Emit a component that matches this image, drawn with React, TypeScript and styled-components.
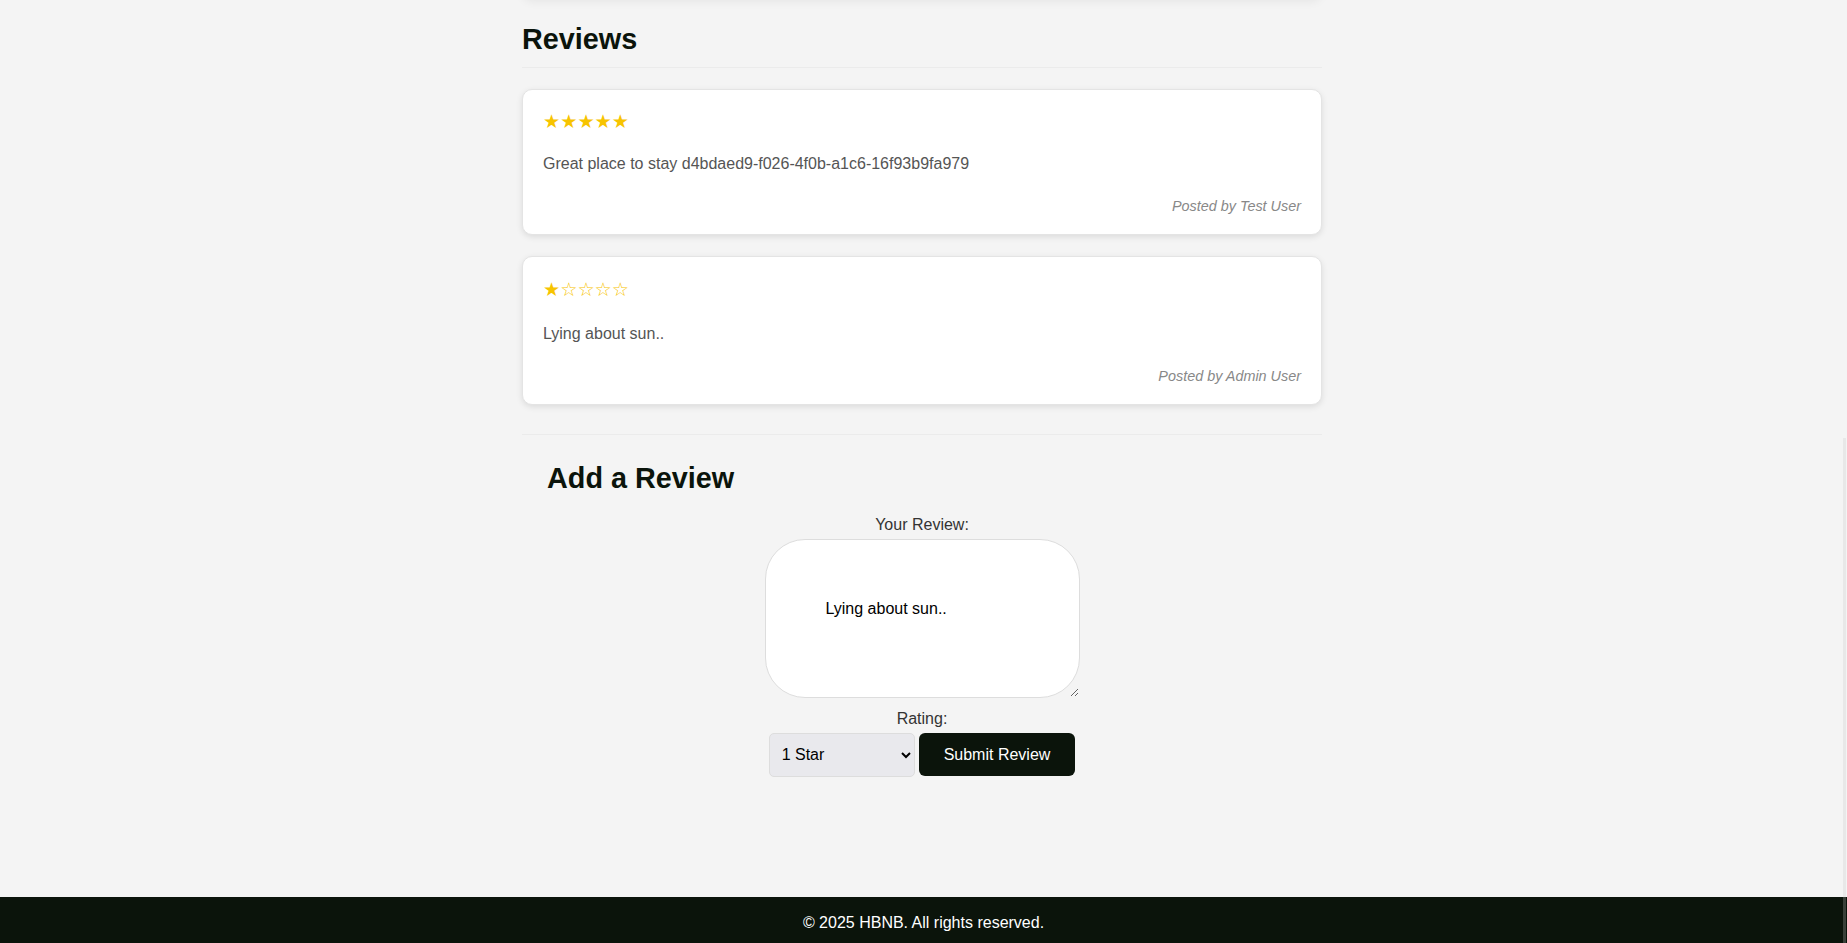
import { FC } from 'react'
import styled, { createGlobalStyle } from 'styled-components'

const GlobalStyle = createGlobalStyle`
  html, body {
    margin: 0;
    padding: 0;
    background: #f4f4f4;
    font-family: Arial, "Liberation Sans", "DejaVu Sans", sans-serif;
    color: #333;
  }
  #root {
    min-height: 100vh;
  }
`

type Review = {
  rating: number
  text: string
  author: string
}

const reviews: Review[] = [
  { rating: 5, text: 'Great place to stay d4bdaed9-f026-4f0b-a1c6-16f93b9fa979', author: 'Test User' },
  { rating: 1, text: 'Lying about sun..', author: 'Admin User' }
]

const stars = (n: number): string => '★'.repeat(n) + '☆'.repeat(5 - n)

const App: FC = () => {
  return (
    <Page>
      <GlobalStyle />
      <Main>
        <PlaceDetails />
        <ReviewsSection>
          <SectionTitle>Reviews</SectionTitle>
          <ReviewList>
            {reviews.map((r) => (
              <ReviewCard key={r.author}>
                <Stars $hollow={r.rating < 5}>{stars(r.rating)}</Stars>
                <Comment>{r.text}</Comment>
                <Author>Posted by {r.author}</Author>
              </ReviewCard>
            ))}
          </ReviewList>
        </ReviewsSection>
        <AddReview>
          <FormTitle>Add a Review</FormTitle>
          <ReviewForm onSubmit={(e) => e.preventDefault()}>
            <Label htmlFor="review-text">Your Review:</Label>
            <TextArea id="review-text" defaultValue="Lying about sun.." />
            <Label htmlFor="rating">Rating:</Label>
            <Controls>
              <Select id="rating" defaultValue="1">
                <option value="1">1 Star</option>
                <option value="2">2 Stars</option>
                <option value="3">3 Stars</option>
                <option value="4">4 Stars</option>
                <option value="5">5 Stars</option>
              </Select>
              <SubmitButton type="submit">Submit Review</SubmitButton>
            </Controls>
          </ReviewForm>
        </AddReview>
      </Main>
      <Footer>© 2025 HBNB. All rights reserved.</Footer>
      <ScrollThumb />
    </Page>
  )
}

const Page = styled.div`
  display: flex;
  flex-direction: column;
  min-height: 100vh;
  padding-right: 3px;
  box-sizing: border-box;
`

const Main = styled.main`
  flex: 1;
  display: flex;
  flex-direction: column;
  width: 100%;
  max-width: 800px;
  margin: 0 auto;
`

// details card above, scrolled out of view; only its shadow shows
const PlaceDetails = styled.section`
  height: 200px;
  margin-top: -200px;
  background: #f4f4f4;
  border-radius: 10px;
  box-shadow: 0 2px 10px rgba(0, 0, 0, 0.06);
`

const ReviewsSection = styled.section`
  display: flex;
  flex-direction: column;
`

const SectionTitle = styled.h2`
  margin: 23px 0 21px;
  padding-bottom: 11px;
  border-bottom: 1px solid #ebebeb;
  font-size: 28.8px;
  line-height: 33px;
  font-weight: 700;
  color: #0b140b;
`

const ReviewList = styled.div`
  display: flex;
  flex-direction: column;
  gap: 21px;
`

const ReviewCard = styled.article`
  background: #fff;
  border: 1px solid #e4e4e4;
  border-radius: 10px;
  padding: 20px;
  box-shadow: 0 2px 6px rgba(0, 0, 0, 0.1);
`

const Stars = styled.div<{ $hollow?: boolean }>`
  font-size: 19.2px;
  line-height: ${(p) => (p.$hollow ? '25.5px' : '23px')};
  color: #f7c400;
  margin-bottom: 22px;
`

const Comment = styled.p`
  margin: 0 0 25px;
  font-size: 16px;
  color: #555;
`

const Author = styled.p`
  margin: 0;
  text-align: right;
  font-size: 14.4px;
  font-style: italic;
  color: #888;
`

const AddReview = styled.section`
  margin-top: 29px;
  border-top: 1px solid #ebebeb;
  padding: 0 25px;
`

const FormTitle = styled.h2`
  margin: 27px 0 21px;
  font-size: 28.8px;
  line-height: 33px;
  font-weight: 700;
  color: #0b140b;
`

const ReviewForm = styled.form`
  display: flex;
  flex-direction: column;
  align-items: center;
`

const Label = styled.label`
  display: block;
  font-size: 16px;
  color: #333;
  margin-bottom: 5px;
`

const TextArea = styled.textarea`
  box-sizing: border-box;
  width: 315px;
  height: 159px;
  padding: 60px;
  margin-bottom: 12px;
  border: 1px solid #ddd;
  border-radius: 40px;
  background: #fff;
  font-family: Arial, "Liberation Sans", sans-serif;
  font-size: 16px;
  color: #000;
  outline: none;
`

const Controls = styled.div`
  display: flex;
  align-items: center;
  gap: 4px;
`

const Select = styled.select`
  box-sizing: border-box;
  width: 146px;
  height: 44px;
  padding: 0 6px 0 8px;
  border: 1px solid #ddd;
  border-radius: 5px;
  background: #e9e9ed;
  font-family: Arial, "Liberation Sans", sans-serif;
  font-size: 16px;
  color: #000;
`

const SubmitButton = styled.button`
  height: 43px;
  padding: 0 25px;
  border: none;
  border-radius: 6px;
  background: #0b140b;
  color: #fff;
  font-family: Arial, "Liberation Sans", sans-serif;
  font-size: 16px;
  cursor: pointer;
`

const Footer = styled.footer`
  background: #0b140b;
  color: #fff;
  text-align: center;
  padding: 17px 0 11px;
  font-size: 16px;
  line-height: 18px;
  margin-right: -3px;
`

const ScrollThumb = styled.div`
  position: fixed;
  top: 438px;
  bottom: 0;
  right: 1px;
  width: 3px;
  background: rgba(197, 197, 197, 0.25);
`

export default App
